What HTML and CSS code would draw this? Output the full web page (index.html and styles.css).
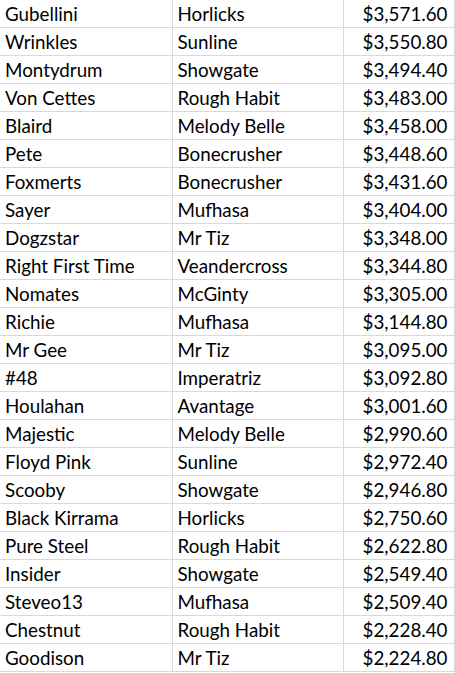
FILE: index.html
```html
<!DOCTYPE html>
<html>
<head>
<meta charset="utf-8">
<link rel="stylesheet" href="styles.css">
</head>
<body>
<table class="sheet">
<tbody>
<tr><td>Gubellini</td><td>Horlicks</td><td class="num">$3,571.60</td></tr>
<tr><td>Wrinkles</td><td>Sunline</td><td class="num">$3,550.80</td></tr>
<tr><td>Montydrum</td><td>Showgate</td><td class="num">$3,494.40</td></tr>
<tr><td>Von Cettes</td><td>Rough Habit</td><td class="num">$3,483.00</td></tr>
<tr><td>Blaird</td><td>Melody Belle</td><td class="num">$3,458.00</td></tr>
<tr><td>Pete</td><td>Bonecrusher</td><td class="num">$3,448.60</td></tr>
<tr><td>Foxmerts</td><td>Bonecrusher</td><td class="num">$3,431.60</td></tr>
<tr><td>Sayer</td><td>Mufhasa</td><td class="num">$3,404.00</td></tr>
<tr><td>Dogzstar</td><td>Mr Tiz</td><td class="num">$3,348.00</td></tr>
<tr><td>Right First Time</td><td>Veandercross</td><td class="num">$3,344.80</td></tr>
<tr><td>Nomates</td><td>McGinty</td><td class="num">$3,305.00</td></tr>
<tr><td>Richie</td><td>Mufhasa</td><td class="num">$3,144.80</td></tr>
<tr><td>Mr Gee</td><td>Mr Tiz</td><td class="num">$3,095.00</td></tr>
<tr><td>#48</td><td>Imperatriz</td><td class="num">$3,092.80</td></tr>
<tr><td>Houlahan</td><td>Avantage</td><td class="num">$3,001.60</td></tr>
<tr><td>Majestic</td><td>Melody Belle</td><td class="num">$2,990.60</td></tr>
<tr><td>Floyd Pink</td><td>Sunline</td><td class="num">$2,972.40</td></tr>
<tr><td>Scooby</td><td>Showgate</td><td class="num">$2,946.80</td></tr>
<tr><td>Black Kirrama</td><td>Horlicks</td><td class="num">$2,750.60</td></tr>
<tr><td>Pure Steel</td><td>Rough Habit</td><td class="num">$2,622.80</td></tr>
<tr><td>Insider</td><td>Showgate</td><td class="num">$2,549.40</td></tr>
<tr><td>Steveo13</td><td>Mufhasa</td><td class="num">$2,509.40</td></tr>
<tr><td>Chestnut</td><td>Rough Habit</td><td class="num">$2,228.40</td></tr>
<tr><td>Goodison</td><td>Mr Tiz</td><td class="num">$2,224.80</td></tr>
</tbody>
</table>
</body>
</html>
```
FILE: styles.css
```css
html, body {
  margin: 0;
  padding: 0;
  background: #ffffff;
}
.sheet {
  border-collapse: collapse;
  table-layout: fixed;
  width: 454px;
  font-family: Lato, "Open Sans", sans-serif;
  font-size: 18.8px;
  color: #000000;
}
.sheet td {
  box-sizing: border-box;
  line-height: 27px;
  padding: 0 4px 0 5px;
  border-right: 1px solid #d9d9d9;
  border-bottom: 1px solid #d9d9d9;
  white-space: nowrap;
  overflow: hidden;
  vertical-align: middle;
}
.sheet td:nth-child(1) { width: 172px; }
.sheet td:nth-child(2) { width: 171px; }
.sheet td:nth-child(3) { width: 111px; }
.sheet td.num {
  text-align: right;
  padding-right: 6px;
}
```
